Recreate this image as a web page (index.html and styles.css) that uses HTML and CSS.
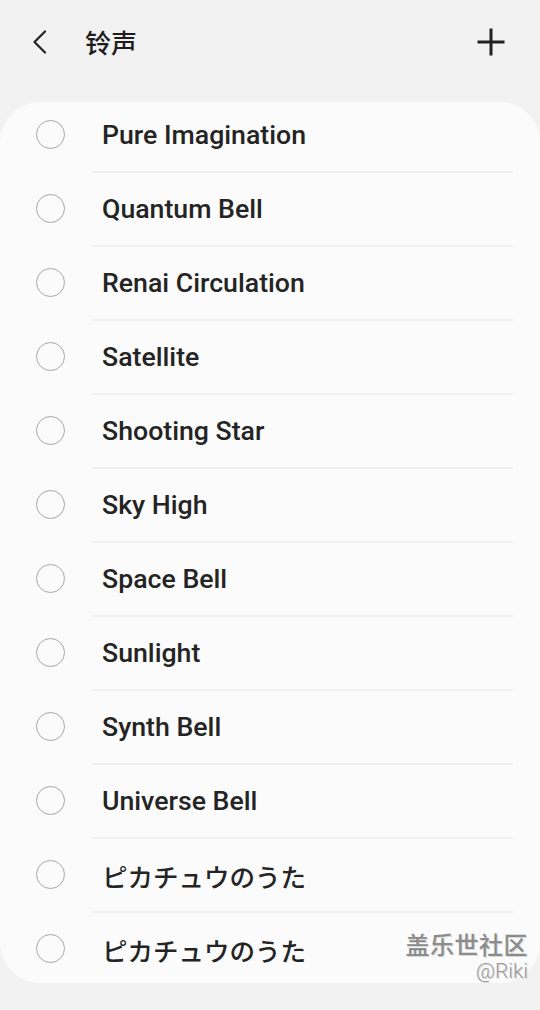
FILE: index.html
```html
<!DOCTYPE html>
<html lang="zh">
<head>
<meta charset="utf-8">
<link rel="stylesheet" href="styles.css">
</head>
<body>
<div class="screen">
  <header class="topbar">
    <div class="back">
      <svg width="16" height="24" viewBox="0 0 16 24"><path d="M13 1.5 L2.5 12 L13 22.5" fill="none" stroke="#222" stroke-width="2.2" stroke-linecap="round" stroke-linejoin="round"/></svg>
    </div>
    <h1 class="title">铃声</h1>
    <div class="add">
      <svg width="28" height="28" viewBox="0 0 28 28"><path d="M14 0.5 V27.5 M0.5 14 H27.5" fill="none" stroke="#222" stroke-width="3"/></svg>
    </div>
  </header>
  <main class="card">
    <ul class="list">
      <li class="row"><span class="radio"></span><span class="label">Pure Imagination</span></li>
      <li class="row"><span class="radio"></span><span class="label">Quantum Bell</span></li>
      <li class="row"><span class="radio"></span><span class="label">Renai Circulation</span></li>
      <li class="row"><span class="radio"></span><span class="label">Satellite</span></li>
      <li class="row"><span class="radio"></span><span class="label">Shooting Star</span></li>
      <li class="row"><span class="radio"></span><span class="label">Sky High</span></li>
      <li class="row"><span class="radio"></span><span class="label">Space Bell</span></li>
      <li class="row"><span class="radio"></span><span class="label">Sunlight</span></li>
      <li class="row"><span class="radio"></span><span class="label">Synth Bell</span></li>
      <li class="row"><span class="radio"></span><span class="label">Universe Bell</span></li>
      <li class="row"><span class="radio"></span><span class="label jp">ピカチュウのうた</span></li>
      <li class="row"><span class="radio"></span><span class="label jp">ピカチュウのうた</span></li>
    </ul>
  </main>
  <div class="watermark">
    <div class="wm-main">盖乐世社区</div>
    <div class="wm-sub">@Riki</div>
  </div>
</div>
</body>
</html>
```
FILE: styles.css
```css
html, body {
  margin: 0;
  padding: 0;
  background: #f2f2f2;
}
body {
  font-family: Roboto, "Noto Sans CJK SC", sans-serif;
  color: #202020;
}
.screen {
  position: relative;
  width: 540px;
  height: 1010px;
  overflow: hidden;
}
.topbar {
  height: 84px;
  display: flex;
  align-items: center;
}
.back {
  width: 16px;
  height: 24px;
  margin-left: 32px;
  display: flex;
}
.title {
  margin: 0 0 0 37px;
  font-family: "Noto Sans CJK SC", sans-serif;
  font-size: 26px;
  font-weight: 500;
  color: #1e1e1e;
  flex: 1;
  line-height: 1;
}
.add {
  width: 28px;
  height: 28px;
  margin-right: 35px;
  display: flex;
}
.card {
  margin-top: 18px;
  height: 881px;
  background: #fbfbfb;
  border-radius: 40px;
  overflow: hidden;
}
.list {
  list-style: none;
  margin: -3px 0 0 0;
  padding: 0;
}
.row {
  height: 74px;
  display: flex;
  align-items: stretch;
}
.radio {
  flex: none;
  width: 27px;
  height: 27px;
  margin: 21px 27px 0 36px;
  border: 1.6px solid #a6a6a6;
  border-radius: 50%;
}
.label {
  flex: 1;
  margin-right: 27px;
  padding-left: 10px;
  border-bottom: 2px solid #f0f0f0;
  display: flex;
  align-items: center;
  font-size: 26.7px;
  font-weight: 500;
  color: #242424;
  height: 72px;
}
.row:last-child .label {
  border-bottom: none;
}
.label.jp {
  font-family: "Noto Sans CJK JP", sans-serif;
  font-size: 25.5px;
  font-weight: 500;
}
.watermark {
  position: absolute;
  right: 12px;
  top: 930px;
  text-align: right;
  color: #8c8c8c;
  text-shadow: 1px 1px 0 #d8d8d8;
}
.wm-main {
  font-family: "Noto Sans CJK SC", sans-serif;
  font-size: 24px;
  line-height: 28px;
  font-weight: 500;
  letter-spacing: 0.5px;
}
.wm-sub {
  font-family: Roboto, sans-serif;
  font-size: 21px;
  line-height: 26px;
  font-weight: 300;
  color: #999;
}
```
